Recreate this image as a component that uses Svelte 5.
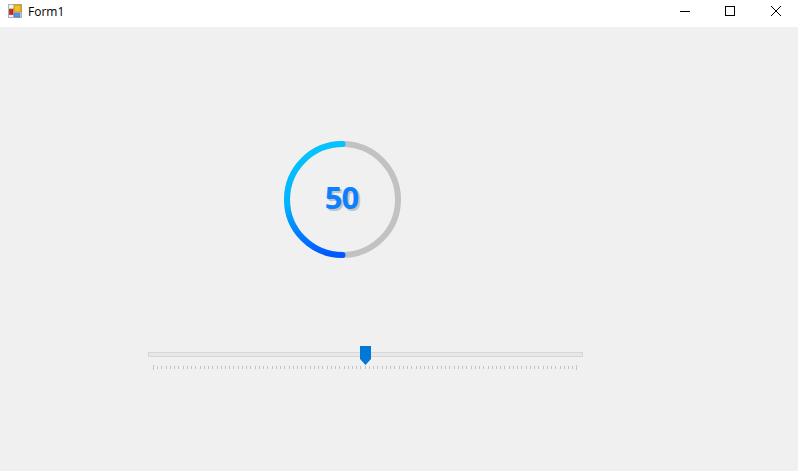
<script>
    const value = 50;
    const ticks = Array.from({ length: 101 }, (_, i) => i);

    const size = 117;
    const stroke = 6;
    const r = (size - stroke) / 2;
    const c = size / 2;
    // arc runs counter clockwise from the top, like the original control
    const angle = (value / 100) * Math.PI * 2;
    const endX = c - r * Math.sin(angle);
    const endY = c - r * Math.cos(angle);
    const arc = `M ${c} ${c - r} A ${r} ${r} 0 0 0 ${endX} ${endY}`;
</script>

<div class="window">
    <header class="titlebar">
        <svg class="appicon" width="14" height="14" viewBox="0 0 14 14">
            <rect x="0.5" y="0.5" width="13" height="13" fill="#f2f2f2" stroke="#b0b0b0"/>
            <path d="M0 4.5H6M5.5 9V14" stroke="#c4c4c4" fill="none"/>
            <rect x="6" y="1" width="7" height="7" fill="#f3c020" stroke="#b98a10" stroke-width="0.8"/>
            <rect x="1.5" y="5.5" width="3.5" height="5" fill="#d02818" stroke="#8a1a10" stroke-width="0.6"/>
            <rect x="6" y="9" width="6" height="4" fill="#5a94e8" stroke="#3a70c0" stroke-width="0.6"/>
        </svg>
        <span class="title">Form1</span>
        <div class="controls">
            <button aria-label="Minimize">
                <svg width="10" height="10" viewBox="0 0 10 10"><path d="M0 5.5H10" stroke="#000" fill="none"/></svg>
            </button>
            <button class="max" aria-label="Maximize">
                <svg width="10" height="10" viewBox="0 0 10 10"><rect x="0.5" y="0.5" width="9" height="9" stroke="#000" fill="none"/></svg>
            </button>
            <button aria-label="Close">
                <svg width="10" height="10" viewBox="0 0 10 10"><path d="M0 0L10 10M10 0L0 10" stroke="#000" fill="none"/></svg>
            </button>
        </div>
    </header>

    <main class="content">
        <div class="gauge">
            <svg width={size} height={size} viewBox="0 0 {size} {size}">
                <defs>
                    <linearGradient id="ring" x1="0" y1="0" x2="0" y2="1">
                        <stop offset="0.1" stop-color="#00c3ff"/>
                        <stop offset="0.55" stop-color="#00b4ff"/>
                        <stop offset="1" stop-color="#0058ff"/>
                    </linearGradient>
                </defs>
                <circle cx={c} cy={c} {r} fill="none" stroke="#c2c2c2" stroke-width={stroke}/>
                <path d={arc} fill="none" stroke="url(#ring)" stroke-width={stroke} stroke-linecap="round"/>
            </svg>
            <span class="value">{value}</span>
        </div>

        <div class="slider">
            <div class="track"></div>
            <div class="thumb"></div>
            <div class="ticks">
                {#each ticks as t}
                    <i class:end={t === 0 || t === 100}></i>
                {/each}
            </div>
        </div>
    </main>
</div>

<style>
    :global(body) {
        background: #f0f0f0;
    }

    .window {
        width: 798px;
        height: 471px;
        display: flex;
        flex-direction: column;
        background: #f0f0f0;
        font-family: "Open Sans", "Noto Sans", sans-serif;
        overflow: hidden;
    }

    .titlebar {
        height: 27px;
        flex: none;
        display: flex;
        align-items: flex-start;
        background: #fff;
        padding-left: 8px;
    }

    .appicon {
        margin-top: 4px;
    }

    .title {
        margin: 3px 0 0 6px;
        font-size: 12px;
        line-height: 17px;
        color: #000;
    }

    .controls {
        margin-left: auto;
        display: flex;
    }

    .controls button {
        width: 45px;
        height: 22px;
        padding: 0;
        border: 0;
        background: none;
        display: flex;
        align-items: center;
        justify-content: center;
    }

    .controls .max {
        margin-right: 1px;
    }

    .content {
        flex: 1;
        display: flex;
        flex-direction: column;
    }

    .gauge {
        width: 117px;
        height: 117px;
        margin: 114px 0 0 284px;
        display: flex;
        align-items: center;
        justify-content: center;
        position: relative;
    }

    .gauge svg {
        position: absolute;
        inset: 0;
    }

    .value {
        position: relative;
        bottom: 2px;
        right: 1px;
        font-size: 31px;
        font-weight: 700;
        line-height: 1;
        letter-spacing: -1px;
        color: #0d80ff;
        text-shadow: 2px 2px 0 #c4c4c4;
    }

    .slider {
        width: 435px;
        margin: 88px 0 0 148px;
        display: flex;
        flex-direction: column;
        position: relative;
    }

    .track {
        height: 5px;
        margin-top: 6px;
        background: #e8e8e8;
        border: 1px solid #d6d6d6;
        box-sizing: border-box;
    }

    .thumb {
        position: absolute;
        left: 212px;
        top: 0;
        width: 11px;
        height: 19px;
        background: #0078d7;
        clip-path: polygon(0 0, 100% 0, 100% 68%, 50% 100%, 0 68%);
    }

    .ticks {
        display: flex;
        justify-content: space-between;
        align-items: center;
        height: 5px;
        margin: 8px 5px 0;
    }

    .ticks i {
        width: 1px;
        height: 3px;
        background: #c4c4c4;
    }

    .ticks i.end {
        height: 5px;
    }
</style>
